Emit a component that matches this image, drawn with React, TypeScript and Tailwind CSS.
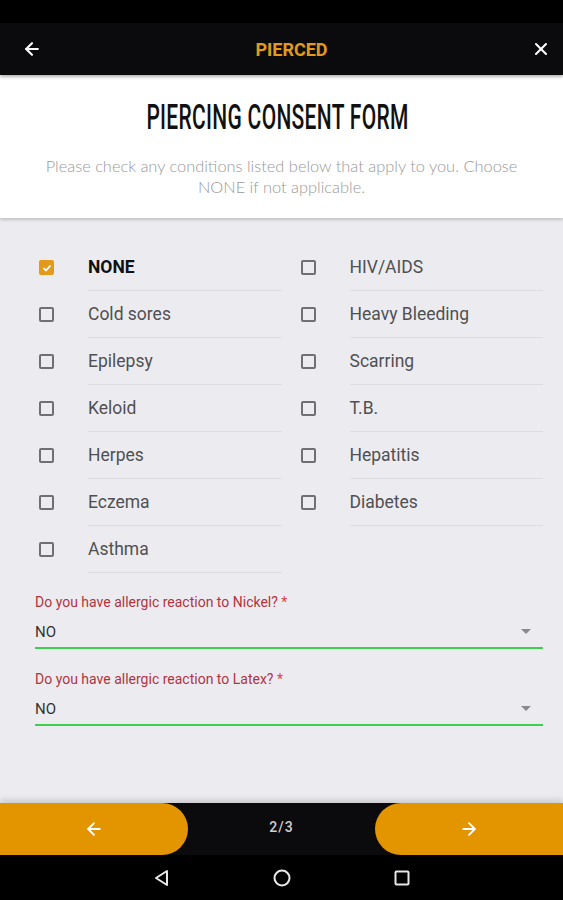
import { ArrowLeft, ArrowRight, X } from 'lucide-react';

const leftItems = ['NONE', 'Cold sores', 'Epilepsy', 'Keloid', 'Herpes', 'Eczema', 'Asthma'];
const rightItems = ['HIV/AIDS', 'Heavy Bleeding', 'Scarring', 'T.B.', 'Hepatitis', 'Diabetes'];

const CheckRow = ({ label, checked }: { label: string; checked?: boolean }) => (
  <div className="flex items-center h-[47px]">
    {checked ? (
      <div className="w-[15px] h-[15px] rounded-[2px] bg-[#e39a1b] flex items-center justify-center">
        <svg width="10" height="10" viewBox="0 0 10 10">
          <path d="M1.5 5.2 L4 7.5 L8.5 2.5" stroke="white" strokeWidth="1.8" fill="none" />
        </svg>
      </div>
    ) : (
      <div className="w-[15px] h-[15px] rounded-[2px] border-2 border-[#707074]" />
    )}
    <div
      className={`ml-[34px] flex-1 h-full flex items-center border-b border-[#dcdce1] text-[17.5px] ${
        checked ? 'font-bold text-[#111]' : 'text-[#505052]'
      }`}
    >
      {label}
    </div>
  </div>
);

const Question = ({ label }: { label: string }) => (
  <div>
    <div className="text-[14px] leading-4 text-[#b2333f]">
      {label} <span className="text-[#e0404a]">*</span>
    </div>
    <div className="flex items-center justify-between mt-[12px] h-[20px] text-[15px] text-[#333]">
      <span>NO</span>
      <svg width="10" height="6" viewBox="0 0 10 6" className="mr-[12px]">
        <path d="M0 0 L10 0 L5 5 Z" fill="#8a8a8e" />
      </svg>
    </div>
    <div className="mt-[5px] h-[2px] bg-[#3fcf4e]" />
  </div>
);

export default function App() {
  return (
    <div className="w-[563px] h-[900px] flex flex-col bg-[#ececf0] overflow-hidden font-['Roboto',sans-serif]">
      {/* status bar */}
      <div className="h-[23px] bg-black" />

      {/* app bar */}
      <header className="h-[52px] bg-[#0b0b0d] flex items-center pl-[22px] pr-[12px] relative z-10 shadow-[0_2px_3px_rgba(0,0,0,0.3)]">
        <ArrowLeft size={20} strokeWidth={2.5} className="text-white" />
        <h1 className="flex-1 text-center pl-[10px] text-[#e39a1b] text-[18px] font-bold">PIERCED</h1>
        <X size={20} strokeWidth={2.5} className="text-white" />
      </header>

      {/* form header */}
      <div className="h-[143px] bg-white flex flex-col items-center shadow-[0_2px_3px_rgba(0,0,0,0.18)] relative z-[5]">
        <div className="mt-[23px] h-[38px] flex items-center pr-[8px]">
          <h2 className="text-[35px] leading-none font-medium text-[#111] scale-x-[0.6] whitespace-nowrap tracking-[0.5px]">
            PIERCING CONSENT FORM
          </h2>
        </div>
        <p className="mt-[19px] px-[38px] text-center text-[16.4px] leading-[21px] text-[#999] font-['Lato',sans-serif] font-light">
          Please check any conditions listed below that apply to you. Choose NONE if not applicable.
        </p>
      </div>

      {/* content */}
      <main className="flex-1 pl-[39px] pr-[20px] pt-[26px]">
        <div className="grid grid-cols-2 gap-x-[19px]">
          <div>
            {leftItems.map((item, i) => (
              <CheckRow key={item} label={item} checked={i === 0} />
            ))}
          </div>
          <div>
            {rightItems.map((item) => (
              <CheckRow key={item} label={item} />
            ))}
          </div>
        </div>
        <div className="-ml-[4px] mt-[21px] flex flex-col gap-[22px]">
          <Question label="Do you have allergic reaction to Nickel?" />
          <Question label="Do you have allergic reaction to Latex?" />
        </div>
      </main>

      {/* footer */}
      <footer className="h-[52px] bg-[#0b0b0d] flex items-center justify-between shadow-[0_-3px_6px_rgba(0,0,0,0.15)]">
        <button className="w-[188px] h-full bg-[#e39500] rounded-r-full flex items-center justify-center">
          <ArrowLeft size={20} strokeWidth={2.2} className="text-white" />
        </button>
        <span className="text-[14px] text-[#cfcfd2] font-medium tracking-[1px] -mt-[4px]">2/3</span>
        <button className="w-[188px] h-full bg-[#e39500] rounded-l-full flex items-center justify-center">
          <ArrowRight size={20} strokeWidth={2.2} className="text-white" />
        </button>
      </footer>

      {/* nav bar */}
      <nav className="h-[45px] bg-black flex items-center justify-center gap-[100px]">
        <svg width="20" height="20" viewBox="0 0 20 20">
          <path d="M15 3 L15 17 L4 10 Z" stroke="#e8e8e8" strokeWidth="2" fill="none" strokeLinejoin="round" />
        </svg>
        <svg width="20" height="20" viewBox="0 0 20 20">
          <circle cx="10" cy="10" r="7.5" stroke="#e8e8e8" strokeWidth="2" fill="none" />
        </svg>
        <svg width="20" height="20" viewBox="0 0 20 20">
          <rect x="3.5" y="3.5" width="13" height="13" rx="1" stroke="#e8e8e8" strokeWidth="2" fill="none" />
        </svg>
      </nav>
    </div>
  );
}
